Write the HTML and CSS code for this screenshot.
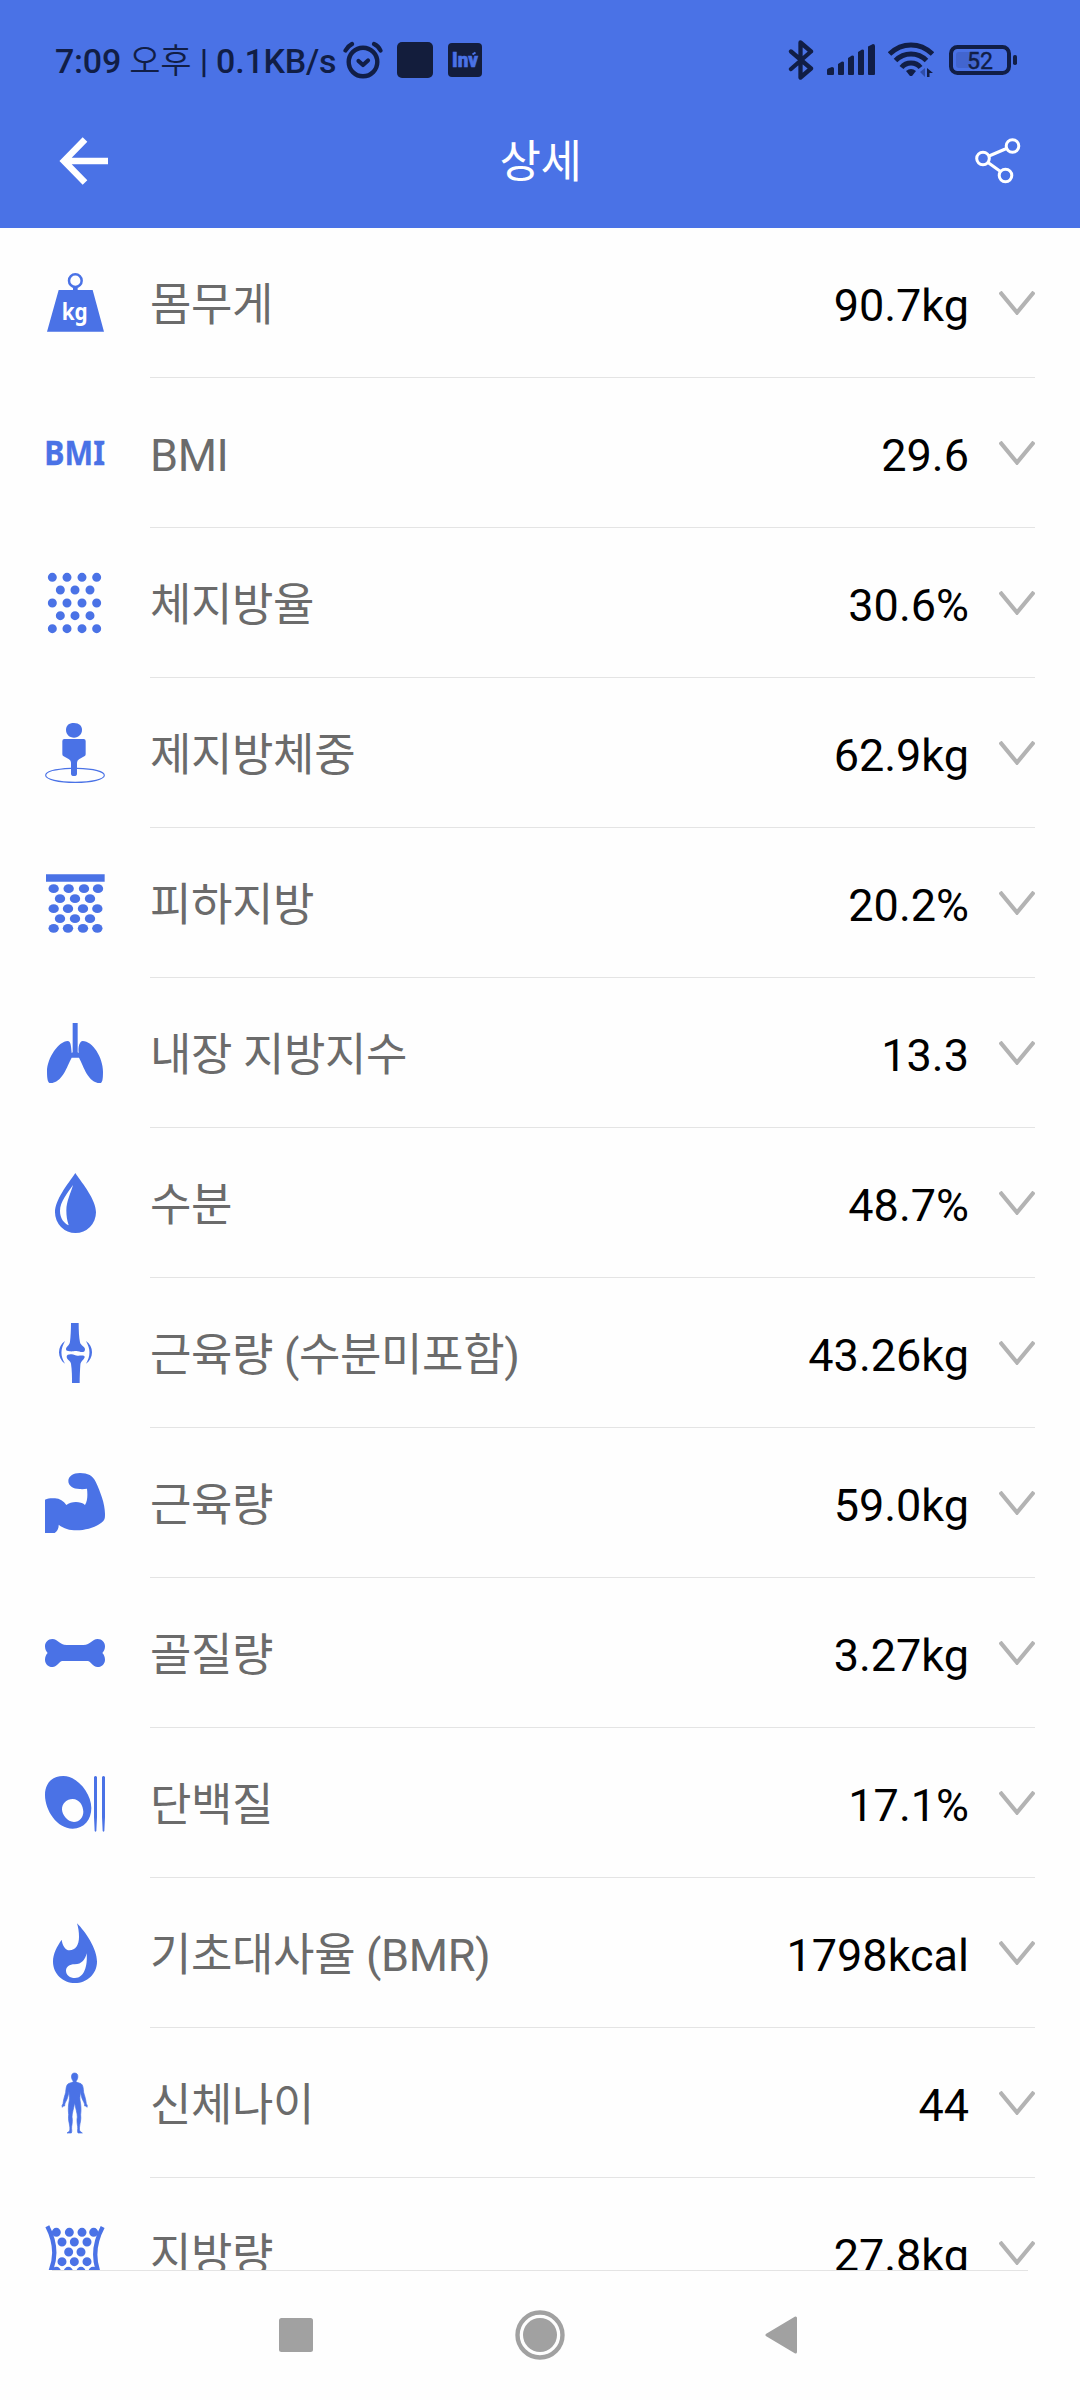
FILE: index.html
```html
<!DOCTYPE html>
<html lang="ko">
<head>
<meta charset="utf-8">
<title>상세</title>
<link rel="stylesheet" href="styles.css">
</head>
<body>
<div class="screen">
  <header class="header">
    <div class="status">
      <div class="status-text">7:09 <span class="ampm">오후</span> | 0.1KB/s</div>
      <svg class="i-alarm" width="40" height="38" viewBox="0 0 40 38" fill="none" stroke="#111e46" stroke-linecap="round"><circle cx="20" cy="21" r="14.3" stroke-width="4.4"/><path d="M15.500 20l4.500 4 5-4.500" stroke-width="4.200" stroke-linejoin="round"/><path d="M2.500 9.500Q5 5 9 3M31 3Q35.500 5 37.500 9.500" stroke-width="4.200"/></svg>
      <span class="block"></span>
      <svg class="i-inv" width="34" height="34" viewBox="0 0 34 34"><rect width="34" height="34" rx="4" fill="#131d3c"/><text x="4" y="24" class="inv" textLength="26" lengthAdjust="spacingAndGlyphs">Inv</text><path d="M24.500 11.500l3-2" stroke="#4a72e6" stroke-width="2"/></svg>
      <span class="spacer"></span>
      <svg class="i-bt" width="26" height="40" viewBox="0 0 26 40" fill="none" stroke="#111e46" stroke-width="4.300" stroke-linecap="round" stroke-linejoin="round"><path d="M3 11.500l20 17-10.500 9V2.500l10.500 9-20 17.500"/></svg>
      <svg class="i-sig" width="48" height="32" viewBox="0 0 48 32" fill="#111e46"><path d="M0 26q0-1 1-1.500l4-1.500q2 0 2 1.500V30q0 1-1 1H1Q0 31 0 30zM11 20l4-2.500q2 0 2 1V30q0 1-1 1h-4q-1 0-1-1zM21 14l4-2.500q2 0 2 1V30q0 1-1 1h-4q-1 0-1-1zM31 8l4-2.500q2 0 2 1V30q0 1-1 1h-4q-1 0-1-1zM41 2.500l5-2.500q2 0 2 2V30q0 1-1 1h-5q-1 0-1-1z"/></svg>
      <svg class="i-wifi" width="46" height="36" viewBox="0 0 46 36"><g fill="none" stroke="#111e46" stroke-width="5"><path d="M1.500 12Q11 3 23 3T44.500 12"/><path d="M7.500 18.500Q14 12 23 12T38.500 18.500"/><path d="M13.500 25.500Q17 21 23 21T32.500 25.500"/></g><path d="M18 29q5-4 10 0l-4 5h-2z" fill="#111e46"/><path d="M37 26v9l-5-5z" fill="#2f4da8"/><path d="M39 35V26l6 5h-3.500v4z" fill="#111e46"/></svg>
      <svg class="i-batt" width="68" height="30" viewBox="0 0 68 30"><rect x="2" y="2" width="58" height="26" rx="6.500" fill="none" stroke="#111e46" stroke-width="4"/><rect x="7" y="7" width="24" height="16" rx="3" fill="#4265cf"/><rect x="64" y="10" width="4" height="10" rx="1.800" fill="#111e46"/><text x="18" y="24" class="pct">52</text></svg>
    </div>
    <div class="titlebar">
      <svg width="50" height="50" viewBox="0 0 50 50" fill="none" stroke="#fff" stroke-width="6.500"><path d="M49 25H6M26 3.500L5 25l21 21.500"/></svg>
      <h1>상세</h1>
      <svg width="46" height="46" viewBox="0 0 46 46" fill="none" stroke="#fff" stroke-width="3"><circle cx="37.500" cy="8" r="6.300"/><circle cx="8" cy="20.500" r="6.300"/><circle cx="30.500" cy="37.500" r="6.300"/><path d="M14 18l17.500-7.500M13 24.500l12.500 9"/></svg>
    </div>
  </header>

  <main class="list">
    <div class="row">
      <svg class="icon" viewBox="0 0 180 180"><circle cx="91" cy="23" r="19" fill="none" stroke="#4a72e6" stroke-width="7.500"/><path d="M84 43h14v8h45l34 125H6L41 51h43z"/><text x="50" y="140" class="kg" textLength="78" lengthAdjust="spacingAndGlyphs">kg</text></svg>
      <div class="cell"><span class="label">몸무게</span><span class="value">90.7kg</span><svg class="chev" viewBox="0 0 36 24"><path d="M1 1l17 20.500L35 1"/></svg></div>
    </div>
    <div class="row">
      <svg class="icon" viewBox="0 0 180 180"><text x="-2" y="126" class="bmi" textLength="182" lengthAdjust="spacingAndGlyphs">BMI</text></svg>
      <div class="cell"><span class="label">BMI</span><span class="value">29.6</span><svg class="chev" viewBox="0 0 36 24"><path d="M1 1l17 20.500L35 1"/></svg></div>
    </div>
    <div class="row">
      <svg class="icon" viewBox="0 0 180 180"><g class="dots"><path d="M22 13h0M66 13h0M111 13h0M155 13h0M46 51h0M90 51h0M135 51h0M22 90h0M66 90h0M111 90h0M155 90h0M46 128h0M90 128h0M135 128h0M22 167h0M66 167h0M111 167h0M155 167h0"/></g></svg>
      <div class="cell"><span class="label">체지방율</span><span class="value">30.6%</span><svg class="chev" viewBox="0 0 36 24"><path d="M1 1l17 20.500L35 1"/></svg></div>
    </div>
    <div class="row">
      <svg class="icon" viewBox="0 0 180 180"><path d="M87 0C103 0 111 9 111 21S101 44 87 44 63 34 63 21 71 0 87 0z"/><path d="M58 48h58q6 0 6 6v40q0 4-4 6l-16 9q-6 4-6 10v33q0 7-9 7t-9-7v-33q0-6-6-10l-16-9q-4-2-4-6V54q0-6 6-6z"/><path d="M78 136C30 138 2 146 2 157c0 12 38 21 88.500 21s87.500-9 87.500-21c0-11-30-20-82-21" fill="none" stroke="#4a72e6" stroke-width="3.400"/></svg>
      <div class="cell"><span class="label">제지방체중</span><span class="value">62.9kg</span><svg class="chev" viewBox="0 0 36 24"><path d="M1 1l17 20.500L35 1"/></svg></div>
    </div>
    <div class="row">
      <svg class="icon" viewBox="0 0 180 180"><path d="M3 4h176v22H3z"/><g><ellipse cx="26" cy="47" rx="15.500" ry="13"/><ellipse cx="71" cy="47" rx="15.500" ry="13"/><ellipse cx="117" cy="47" rx="15.500" ry="13"/><ellipse cx="159" cy="47" rx="15.500" ry="13"/><ellipse cx="45" cy="77" rx="15.500" ry="13"/><ellipse cx="90" cy="77" rx="15.500" ry="13"/><ellipse cx="135" cy="77" rx="15.500" ry="13"/><ellipse cx="26" cy="107" rx="15.500" ry="13"/><ellipse cx="69" cy="107" rx="15.500" ry="13"/><ellipse cx="114" cy="107" rx="15.500" ry="13"/><ellipse cx="157" cy="107" rx="15.500" ry="13"/><ellipse cx="45" cy="137" rx="15.500" ry="13"/><ellipse cx="90" cy="137" rx="15.500" ry="13"/><ellipse cx="135" cy="137" rx="15.500" ry="13"/><ellipse cx="26" cy="166" rx="15.500" ry="13"/><ellipse cx="69" cy="166" rx="15.500" ry="13"/><ellipse cx="114" cy="166" rx="15.500" ry="13"/><ellipse cx="157" cy="166" rx="15.500" ry="13"/></g></svg>
      <div class="cell"><span class="label">피하지방</span><span class="value">20.2%</span><svg class="chev" viewBox="0 0 36 24"><path d="M1 1l17 20.500L35 1"/></svg></div>
    </div>
    <div class="row">
      <svg class="icon" viewBox="0 0 180 180"><path d="M83 0h15v88l3 2C99 70 104 55 113 54c30 0 61 50 61 92 0 24-2 34-9 34-36 0-49-50-63-76H80C66 130 52 180 16 180c-7 0-10-10-10-34C6 104 42 54 68 54c9 0 10 12 12 36l3-2z"/></svg>
      <div class="cell"><span class="label">내장 지방지수</span><span class="value">13.3</span><svg class="chev" viewBox="0 0 36 24"><path d="M1 1l17 20.500L35 1"/></svg></div>
    </div>
    <div class="row">
      <svg class="icon" viewBox="0 0 180 180"><path fill-rule="evenodd" d="M91 0C114 34 153 80 153 118a61.500 62 0 0 1-123 0C30 80 68 34 91 0zM84 36C68 60 45 86 45 114c0 22 12 37 26 43-5-15-7-28-7-45 0-28 13-50 20-76z"/></svg>
      <div class="cell"><span class="label">수분</span><span class="value">48.7%</span><svg class="chev" viewBox="0 0 36 24"><path d="M1 1l17 20.500L35 1"/></svg></div>
    </div>
    <div class="row">
      <svg class="icon" viewBox="0 0 180 180"><path d="M78 0h23c0 22 1 44 4 58 2 10 15 13 15 21 0 5-2 8-6 8-8 1-12-3-20-3s-12 2-20 1c-6-1-11-1-11-6 0-10 10-10 12-23 2-14 3-36 3-56zM65 101c0-6 8-8 15-7 7 0 12 5 20 4 9-1 19-2 19 4 0 7-12 11-13 24-1 14-2 36-2 54H81c0-18 0-38-3-58-1-10-13-11-13-21zM60 54C46 80 46 98 60 122 36 106 36 70 60 54zM123 54c14 26 14 44 0 68 24-16 24-52 0-68z"/></svg>
      <div class="cell"><span class="label">근육량 (수분미포함)</span><span class="value">43.26kg</span><svg class="chev" viewBox="0 0 36 24"><path d="M1 1l17 20.500L35 1"/></svg></div>
    </div>
    <div class="row">
      <svg class="icon" viewBox="0 0 180 180"><path d="M0 80C10 75 22 75 30 76c14 1 26 8 34 20 14-11 42-12 56 0 8-14 8-30 6-49-6 1-14 2-22 1C84 48 70 38 70 24 70 10 84 0 105 0c24 0 38 8 47 26 14 30 28 66 28 96 0 10 0 16-5 22-18 17-50 28-80 28-22 0-38-5-54-17 1 11-5 20-12 25H0z"/></svg>
      <div class="cell"><span class="label">근육량</span><span class="value">59.0kg</span><svg class="chev" viewBox="0 0 36 24"><path d="M1 1l17 20.500L35 1"/></svg></div>
    </div>
    <div class="row">
      <svg class="icon" viewBox="0 0 180 180"><path d="M22 48c18 0 20 18 43 18h50c23 0 25-18 43-18 13 0 22 10 22 22 0 8-3 15-8 20 5 5 8 12 8 20 0 12-9 22-22 22-16 0-20-18-30-18H52c-10 0-14 18-30 18-13 0-22-10-22-22 0-8 3-15 8-20-5-5-8-12-8-20 0-12 9-22 22-22z"/></svg>
      <div class="cell"><span class="label">골질량</span><span class="value">3.27kg</span><svg class="chev" viewBox="0 0 36 24"><path d="M1 1l17 20.500L35 1"/></svg></div>
    </div>
    <div class="row">
      <svg class="icon" viewBox="0 0 180 180"><path fill-rule="evenodd" d="M55 9c42 0 84 52 84 96 0 36-22 62-56 62C36 167 0 112 0 66 0 32 20 9 55 9zM83 78c-18 0-32 13-32 31 0 16 16 38 36 38 16 0 28-14 28-31 0-18-12-38-32-38z"/><path d="M147 12q4.500-6 9 0v120l-2 42q-2.500 5-5 0l-2-42zM171 12q4.500-6 9 0v120l-2 42q-2.500 5-5 0l-2-42z"/></svg>
      <div class="cell"><span class="label">단백질</span><span class="value">17.1%</span><svg class="chev" viewBox="0 0 36 24"><path d="M1 1l17 20.500L35 1"/></svg></div>
    </div>
    <div class="row">
      <svg class="icon" viewBox="0 0 180 180"><path fill-rule="evenodd" d="M96 1c26 26 60 76 60 115 0 36-30 64-66 64s-66-28-66-64c0-24 12-46 26-66 2 16 10 32 24 32 17 0 28-16 28-40 0-16-2-28-6-41zM125 91c-4 18-14 33-36 33-16 0-26 8-26 19 0 13 12 22 27 22 28 0 38-36 35-74z"/></svg>
      <div class="cell"><span class="label">기초대사율 (BMR)</span><span class="value">1798kcal</span><svg class="chev" viewBox="0 0 36 24"><path d="M1 1l17 20.500L35 1"/></svg></div>
    </div>
    <div class="row">
      <svg class="icon" viewBox="0 0 180 180"><path d="M89 0c7 0 10 5 9.500 12-.5 6-3 10-5.500 13 1 4 8 4 15 7 6 3 7 14 8 26 2 8 6 18 8 34l3 6-1 5-3-4-4 0c0-6-1-8-4-14-5-9-7-19-9-30 0 12-2 16-1 26 3 16 4 28 2 44 2 16-2 24-3 34-1 8-1 12 1 16l7 5H99c-3-6 0-11-1-19-2-12-3-20-1-29 0-12-5-24-8-43-3 19-8 31-8 43 2 9 1 17-1 29-1 8 2 13-1 19H66l7-5c2-4 2-8 1-16-1-10-5-18-3-34-2-16-1-28 2-44 1-10-1-14-1-26-2 11-4 21-9 30-3 6-4 8-4 14l-4 0-3 4-1-5 3-6c2-16 6-26 8-34 1-12 2-23 8-26 7-3 14-3 15-7-2.500-3-5-7-5.500-13C79 5 82 0 89 0z" stroke="#4a72e6" stroke-width="2"/></svg>
      <div class="cell"><span class="label">신체나이</span><span class="value">44</span><svg class="chev" viewBox="0 0 36 24"><path d="M1 1l17 20.500L35 1"/></svg></div>
    </div>
    <div class="row">
      <svg class="icon" viewBox="0 0 180 180"><path d="M7 10Q43 80 17 144M173 12Q137 80 159 144" fill="none" stroke="#4a72e6" stroke-width="13"/><g class="dots"><path d="M34 28h0M73 28h0M111 28h0M146 28h0M51 57h0M88 57h0M126 57h0M71 87h0M108 87h0M51 116h0M88 116h0M126 116h0M34 145h0M70 145h0M108 145h0M144 145h0"/></g></svg>
      <div class="cell"><span class="label">지방량</span><span class="value">27.8kg</span><svg class="chev" viewBox="0 0 36 24"><path d="M1 1l17 20.500L35 1"/></svg></div>
    </div>
  </main>

  <nav class="nav">
    <svg width="34" height="34" viewBox="0 0 34 34"><rect width="34" height="34" rx="2.500" fill="#a1a1a1"/></svg>
    <svg class="home" width="50" height="50" viewBox="0 0 50 50"><circle cx="25" cy="25" r="22.500" fill="none" stroke="#a1a1a1" stroke-width="4.400"/><circle cx="25" cy="25" r="17" fill="#a1a1a1"/></svg>
    <svg width="34" height="38" viewBox="0 0 34 38"><path d="M3 19L31.500 2v34z" fill="#a1a1a1" stroke="#a1a1a1" stroke-width="3" stroke-linejoin="round"/></svg>
  </nav>
</div>
</body>
</html>
```

FILE: styles.css
```css
* { box-sizing: border-box; }
body { margin: 0; background: #fefefe; font-family: Roboto, "Noto Sans CJK KR", sans-serif; }
svg { display: block; flex: none; }
.screen { width: 1080px; height: 2400px; display: flex; flex-direction: column; overflow: hidden; }

.header { height: 228px; flex: none; background: #4a72e6; }
.status { height: 120px; padding: 0 63px 0 55px; display: flex; align-items: center; color: #111e46; }
.status-text { width: 288px; font-size: 34px; font-weight: 500; line-height: 40px; white-space: nowrap; letter-spacing: -0.22px; padding-top: 1px; }
.ampm { font-weight: 350; }
.block { width: 36px; height: 36px; border-radius: 5px; background: #131d3c; margin: 0 15px 0 14px; }
.spacer { flex: 1; }
.inv { font: 900 20px Roboto, sans-serif; fill: #4a72e6; stroke: #4a72e6; stroke-width: 0.6px; }
.i-sig { margin-left: 13px; }
.i-wifi { margin-left: 13px; }
.i-batt { margin-left: 15px; }
.pct { font: 400 23px Roboto, sans-serif; fill: #111e46; stroke: #111e46; stroke-width: 0.4px; }

.titlebar { height: 82px; padding: 0 59px 0 59px; display: flex; align-items: center; justify-content: space-between; }
.titlebar h1 { margin: 0; padding: 4px 3px 0 0; color: #fff; font-size: 45px; font-weight: 400; line-height: 60px; letter-spacing: -0.4px; }

.list { height: 2042px; flex: none; overflow: hidden; }
.row { height: 150px; padding: 0 45px; display: flex; align-items: center; gap: 45px; }
.icon { width: 60px; height: 60px; fill: #4a72e6; overflow: visible; }
.kg { font: 700 68px "Noto Sans", sans-serif; fill: #fff; }
.bmi { font: 700 101px "Noto Sans", sans-serif; stroke: #4a72e6; stroke-width: 1px; }
.dots { stroke: #4a72e6; stroke-width: 27px; stroke-linecap: round; }
.cell { flex: 1; height: 150px; display: flex; align-items: center; border-bottom: 1px solid #e4e4e4; }
.label { flex: 1; padding-top: 7px; font-size: 45px; color: #6b6b6b; line-height: 60px; letter-spacing: -0.36px; }
.value { padding-top: 7px; font-size: 45px; color: #000; line-height: 60px; }
.chev { width: 36px; height: 24px; margin-left: 30px; fill: none; stroke: #b3b3b3; stroke-width: 4.2px; }

.nav { height: 130px; padding: 0 282px 0 279px; display: flex; align-items: center; justify-content: space-between; background: linear-gradient(#e4e4e4, #e4e4e4) 52px 0 / 976px 1px no-repeat; }
.home { margin-left: 3px; }
```
